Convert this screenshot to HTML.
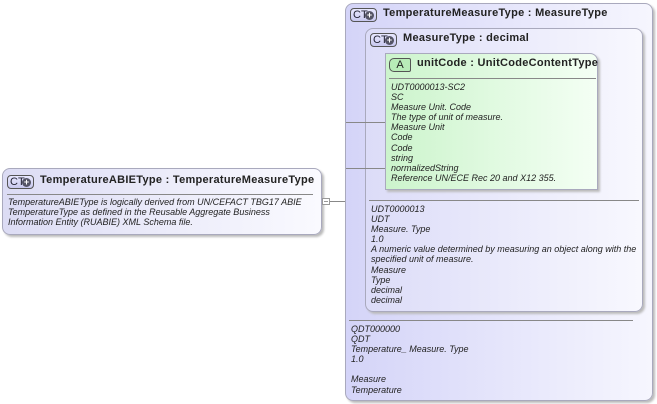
<!DOCTYPE html>
<html><head><style>
body{margin:0;width:657px;height:404px;background:#fff;position:relative;overflow:hidden;font-family:"Liberation Sans",sans-serif;}
.box{position:absolute;border:1px solid #a9a9bd;border-radius:8px;box-shadow:2px 2px 2px #bbb;box-sizing:border-box;}
.t{position:absolute;font-size:9px;font-style:italic;color:#222;line-height:10.1px;white-space:pre;}
.h{position:absolute;font-size:11px;font-weight:bold;color:#222;white-space:nowrap;letter-spacing:0.28px}
.ct{position:absolute;width:27px;height:14px;border:1px solid #555;border-radius:4px;background:linear-gradient(#e8e8ff,#c8c8ee);box-sizing:border-box;font-size:11px;line-height:12px;color:#223;padding-left:2px}
.ct i{position:absolute;right:2px;top:2px;width:9px;height:9px;border-radius:50%;background:#556;color:#fff;font-style:normal;font-size:9px;line-height:9px;text-align:center;font-weight:bold}
.sep{position:absolute;height:1px;background:#888;}
.ln{position:absolute;background:#888;}
</style></head><body>
<div class="box" style="left:2px;top:168px;width:320px;height:67px;background:linear-gradient(90deg,#dcdcf4,#fafaff);"></div>
<div class="ct" style="left:7px;top:175px">CT<i>+</i></div>
<div class="h" style="left:40px;top:174px">TemperatureABIEType : TemperatureMeasureType</div>
<div class="sep" style="left:7px;top:194px;width:306px"></div>
<div class="t" style="left:8px;top:197px">TemperatureABIEType is logically derived from UN/CEFACT TBG17 ABIE
TemperatureType as defined in the Reusable Aggregate Business
Information Entity (RUABIE) XML Schema file.</div>
<div style="position:absolute;left:322px;top:198px;width:8px;height:7px;border:1px solid #999;background:#fff;box-sizing:border-box"></div>
<div class="ln" style="left:324px;top:201px;width:4px;height:1px;background:#999"></div>
<div class="ln" style="left:330px;top:201px;width:15px;height:1px"></div>

<div class="box" style="left:345px;top:3px;width:308px;height:398px;background:linear-gradient(90deg,#d4d4f8,#f6f6fe);"></div>
<div class="ct" style="left:350px;top:8px">CT<i>+</i></div>
<div class="h" style="left:383px;top:7px">TemperatureMeasureType : MeasureType</div>

<div class="box" style="left:365px;top:28px;width:278px;height:284px;background:linear-gradient(90deg,#dcdcf8,#f8f8fe);"></div>
<div class="ct" style="left:370px;top:33px">CT<i>+</i></div>
<div class="h" style="left:403px;top:32px">MeasureType : decimal</div>

<div class="ln" style="left:346px;top:122px;width:40px;height:1px"></div>
<div class="ln" style="left:346px;top:168px;width:40px;height:1px"></div>

<div class="box" style="left:385px;top:53px;width:213px;height:137px;border-radius:0 8px 0 0;background:linear-gradient(90deg,#ccf4cc,#f4fff4);"></div>
<div style="position:absolute;left:389px;top:58px;width:22px;height:14px;border:1px solid #555;border-radius:5px 2px 2px 5px;background:#b8ecb8;box-sizing:border-box;font-size:11px;line-height:12px;text-align:center;color:#222">A</div>
<div class="h" style="left:417px;top:57px">unitCode : UnitCodeContentType</div>
<div class="sep" style="left:389px;top:78px;width:207px"></div>
<div class="t" style="left:391px;top:82px">UDT0000013-SC2
SC
Measure Unit. Code
The type of unit of measure.
Measure Unit
Code
Code
string
normalizedString
Reference UN/ECE Rec 20 and X12 355.</div>

<div class="sep" style="left:369px;top:200px;width:270px"></div>
<div class="t" style="left:371px;top:204px">UDT0000013
UDT
Measure. Type
1.0
A numeric value determined by measuring an object along with the
specified unit of measure.
Measure
Type
decimal
decimal</div>

<div class="sep" style="left:349px;top:320px;width:284px"></div>
<div class="t" style="left:351px;top:324px">QDT000000
QDT
Temperature_ Measure. Type
1.0

Measure
Temperature</div>
</body></html>
